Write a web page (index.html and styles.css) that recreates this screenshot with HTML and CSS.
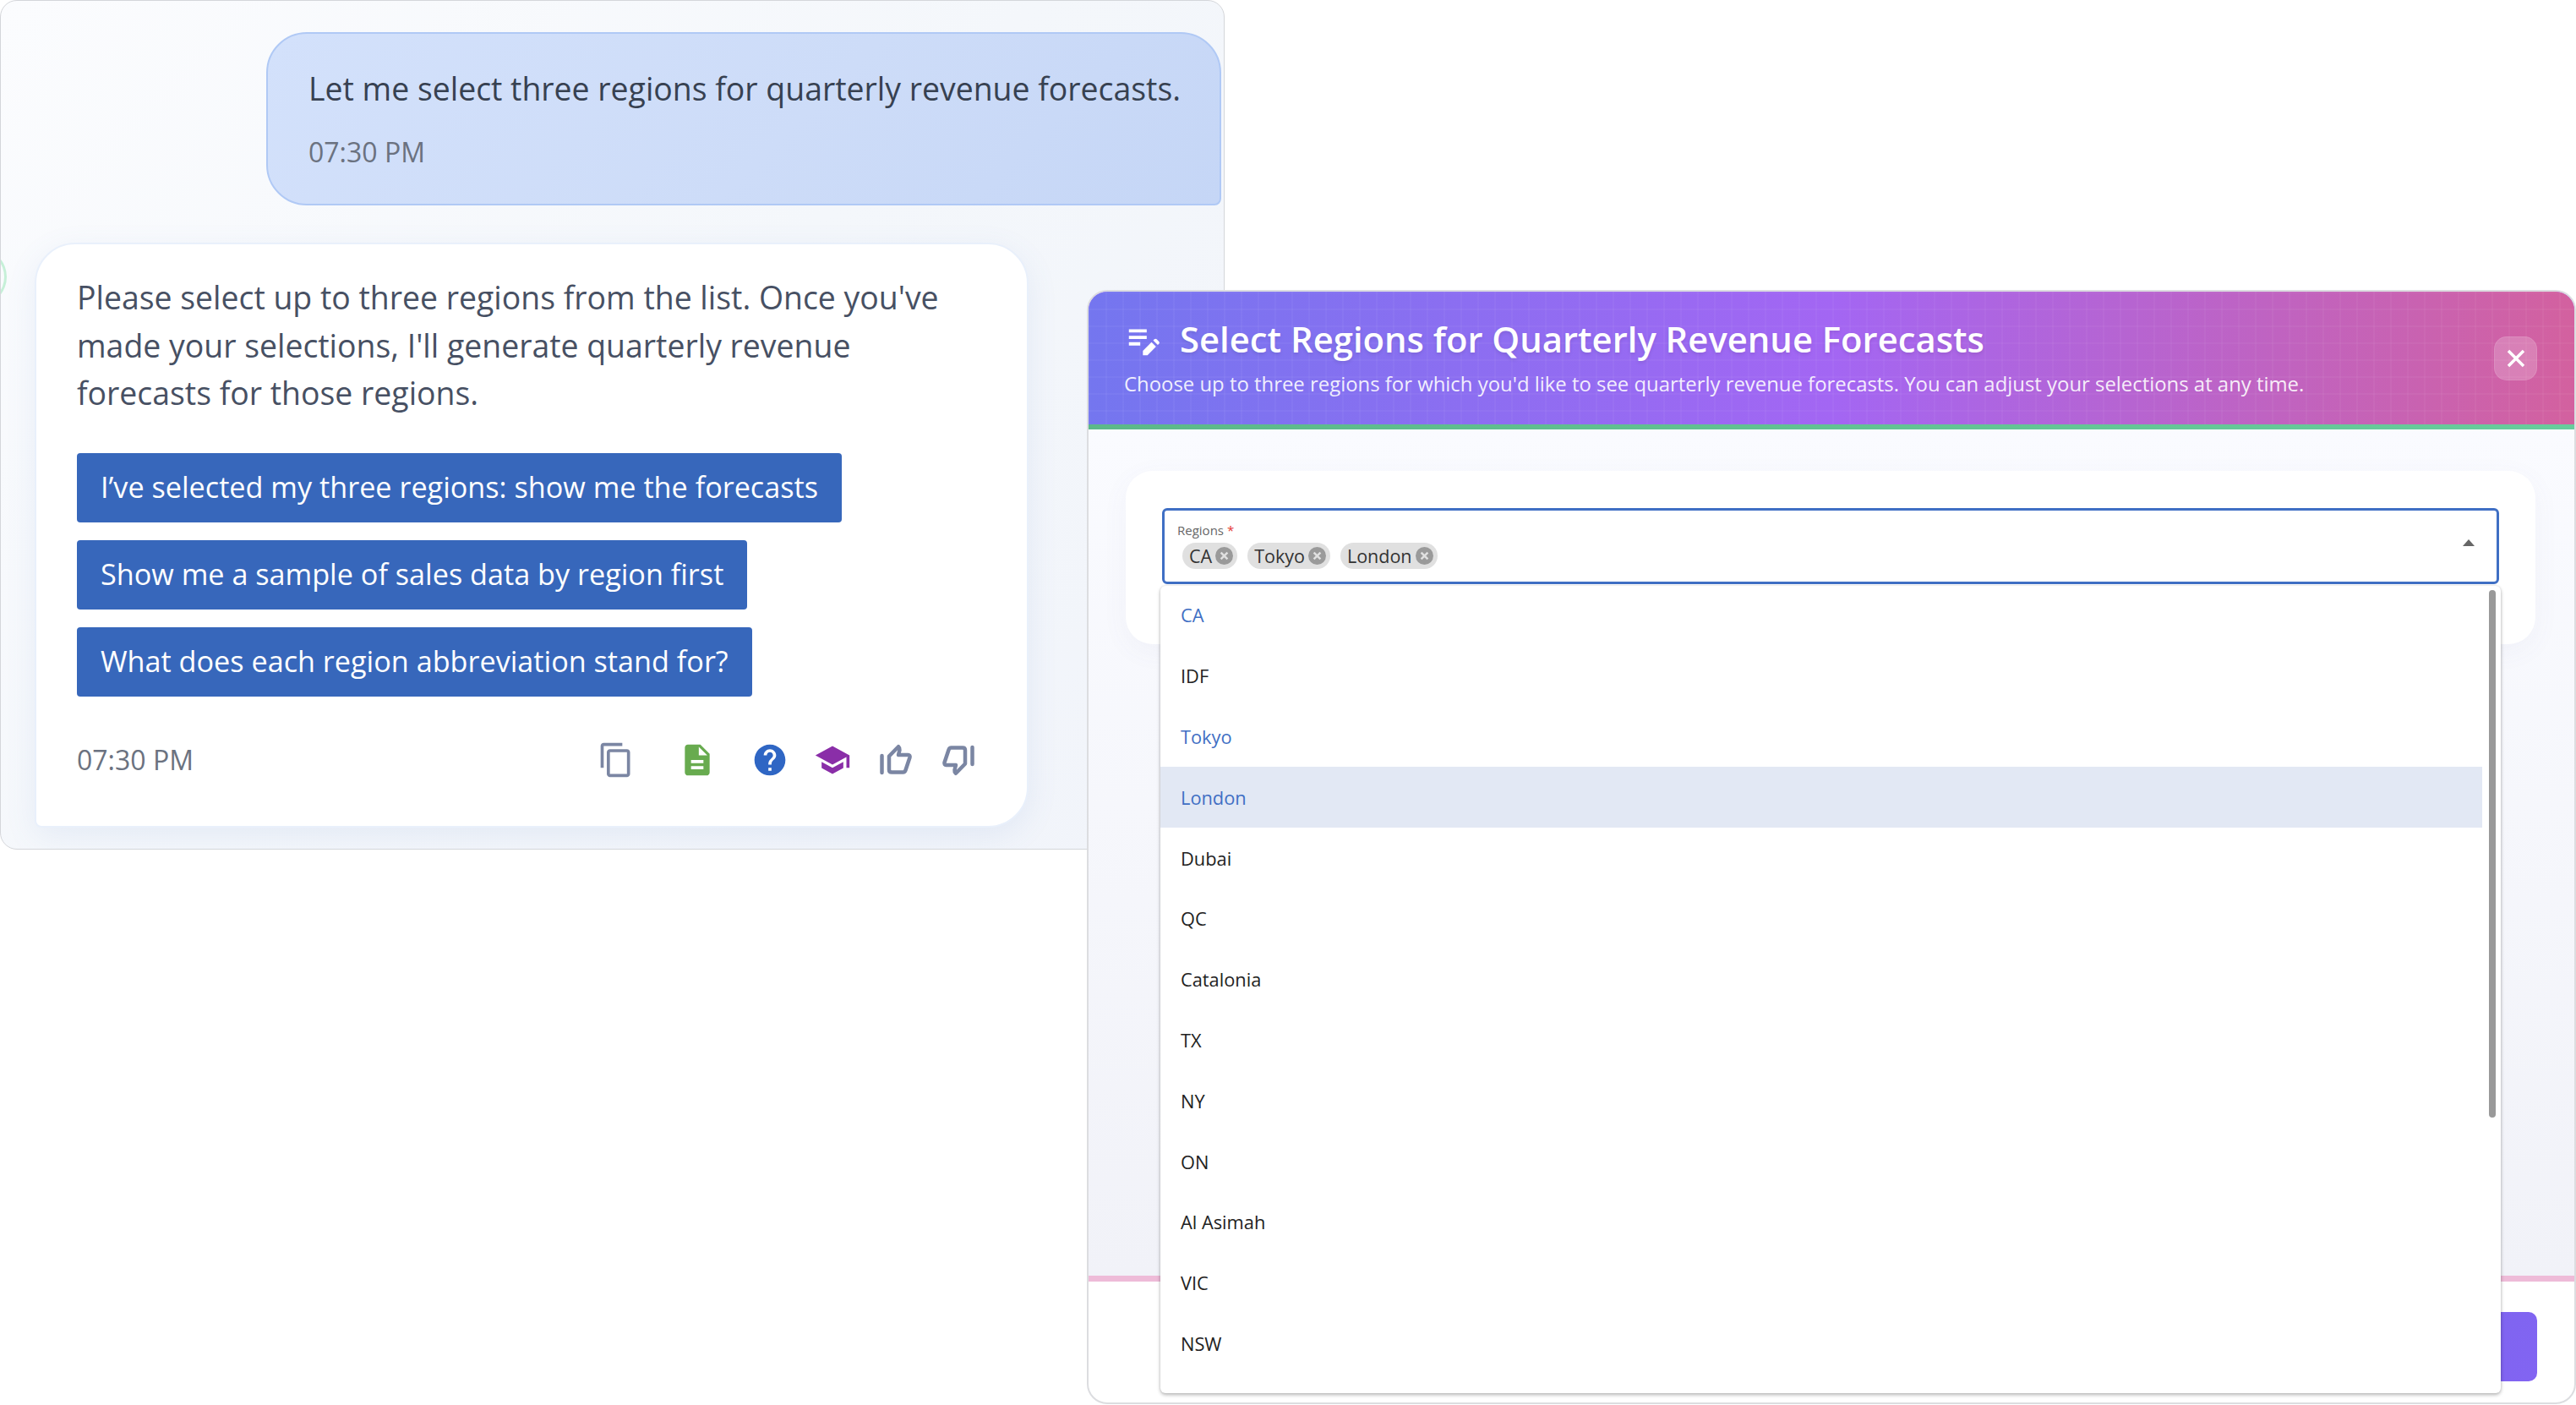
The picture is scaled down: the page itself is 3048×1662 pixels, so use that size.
FILE: index.html
```html
<!DOCTYPE html>
<html lang="en">
<head>
<meta charset="utf-8">
<title>Select Regions</title>
<link rel="stylesheet" href="styles.css">
</head>
<body>
<section class="chat-window">
  <span class="avatar-edge"></span>
  <div class="user-bubble">
    <p class="user-text">Let me select three regions for quarterly revenue forecasts.</p>
    <p class="time">07:30 PM</p>
  </div>
  <div class="agent-card">
    <p class="agent-text">Please select up to three regions from the list. Once you've made your selections, I'll generate quarterly revenue forecasts for those regions.</p>
    <div class="suggestions">
      <button class="suggestion">I’ve selected my three regions: show me the forecasts</button>
      <button class="suggestion">Show me a sample of sales data by region first</button>
      <button class="suggestion">What does each region abbreviation stand for?</button>
    </div>
    <div class="agent-foot">
      <span class="time">07:30 PM</span>
      <div class="actions">
        <svg class="icon icon-copy" viewBox="0 0 24 24"><path d="M16 1H4c-1.1 0-2 .9-2 2v14h2V3h12V1zm3 4H8c-1.1 0-2 .9-2 2v14c0 1.1.9 2 2 2h11c1.1 0 2-.9 2-2V7c0-1.1-.9-2-2-2zm0 16H8V7h11v14z"/></svg>
        <svg class="icon icon-doc" viewBox="0 0 24 24"><path d="M14 2H6c-1.1 0-1.99.9-1.99 2L4 20c0 1.1.89 2 1.99 2H18c1.1 0 2-.9 2-2V8l-6-6zm2 16H8v-2h8v2zm0-4H8v-2h8v2zm-3-5V3.5L18.5 9H13z"/></svg>
        <svg class="icon icon-help" viewBox="0 0 24 24"><path d="M12 2C6.48 2 2 6.48 2 12s4.48 10 10 10 10-4.48 10-10S17.52 2 12 2zm1 17h-2v-2h2v2zm2.07-7.75l-.9.92C13.45 12.9 13 13.5 13 15h-2v-.5c0-1.1.45-2.1 1.17-2.83l1.24-1.26c.37-.36.59-.86.59-1.41 0-1.1-.9-2-2-2s-2 .9-2 2H8c0-2.21 1.79-4 4-4s4 1.79 4 4c0 .88-.36 1.68-.93 2.25z"/></svg>
        <svg class="icon icon-school" viewBox="0 0 24 24"><path d="M5 13.18v4L12 21l7-3.82v-4L12 17l-7-3.82zM12 3 1 9l11 6 9-4.91V17h2V9L12 3z"/></svg>
        <svg class="icon icon-thumb" viewBox="0 0 44 44"><path d="M5.5 17v20M14 17.5 25 6.2c1.2 1.2 1.8 2.4 1.5 4L25 16h11.500c1.500 0 2.500 1.300 2 3l-5 15c-.5 1.500-1.500 2.500-3 2.500H17c-2 0-3-1-3-3z"/></svg>
        <svg class="icon icon-thumb icon-flip" viewBox="0 0 44 44"><path d="M5.500 17v20M14 17.500 25 6.200c1.200 1.200 1.800 2.400 1.500 4L25 16h11.500c1.500 0 2.500 1.300 2 3l-5 15c-.5 1.500-1.500 2.500-3 2.500H17c-2 0-3-1-3-3z"/></svg>
      </div>
    </div>
  </div>
</section>

<section class="dialog">
  <header class="dialog-head">
    <div class="head-text">
      <div class="head-title">
        <svg class="title-icon" viewBox="0 0 24 24"><path d="M3 10h11v2H3zm0-4h11v2H3zm0 8h7v2H3zm15.010-1.130.710-.710c.390-.390 1.020-.390 1.410 0l1.410 1.410c.390.390.390 1.020 0 1.410l-.710.710zm-1.060 1.060-5.310 5.310V22h2.820l5.300-5.300z"/></svg>
        <h1 class="title">Select Regions for Quarterly Revenue Forecasts</h1>
      </div>
      <p class="subtitle">Choose up to three regions for which you'd like to see quarterly revenue forecasts. You can adjust your selections at any time.</p>
    </div>
    <button class="close" aria-label="Close">
      <svg viewBox="0 0 22 22"><path d="M2 2 20 20M20 2 2 20"/></svg>
    </button>
  </header>
  <div class="head-rule"></div>
  <div class="dialog-body">
    <div class="form-card">
      <div class="select-wrap">
        <div class="select">
          <div class="select-main">
            <span class="select-label">Regions <span class="req">*</span></span>
            <div class="chips">
              <span class="chip">CA<svg class="chip-x" viewBox="0 0 20 20"><circle cx="10" cy="10" r="10"/><path d="M6.300 6.300l7.400 7.400M13.700 6.300l-7.400 7.400"/></svg></span>
              <span class="chip">Tokyo<svg class="chip-x" viewBox="0 0 20 20"><circle cx="10" cy="10" r="10"/><path d="M6.300 6.300l7.400 7.400M13.700 6.300l-7.400 7.400"/></svg></span>
              <span class="chip">London<svg class="chip-x" viewBox="0 0 20 20"><circle cx="10" cy="10" r="10"/><path d="M6.300 6.300l7.400 7.400M13.700 6.300l-7.400 7.400"/></svg></span>
            </div>
          </div>
          <span class="caret"></span>
        </div>
        <div class="menu">
          <ul class="options">
            <li class="option is-picked">CA</li>
            <li class="option">IDF</li>
            <li class="option is-picked">Tokyo</li>
            <li class="option is-picked is-active">London</li>
            <li class="option">Dubai</li>
            <li class="option">QC</li>
            <li class="option">Catalonia</li>
            <li class="option">TX</li>
            <li class="option">NY</li>
            <li class="option">ON</li>
            <li class="option">Al Asimah</li>
            <li class="option">VIC</li>
            <li class="option">NSW</li>
          </ul>
          <span class="thumb"></span>
        </div>
      </div>
    </div>
  </div>
  <div class="foot-rule"></div>
  <footer class="dialog-foot">
    <button class="primary" aria-label="Confirm"></button>
  </footer>
</section>
</body>
</html>
```

FILE: styles.css
```css
* { box-sizing: border-box; }
html, body { margin: 0; padding: 0; }
body {
  width: 3048px;
  height: 1662px;
  position: relative;
  overflow: hidden;
  background: #fff;
  font-family: "Open Sans", "Noto Sans", sans-serif;
}
p, h1, ul { margin: 0; padding: 0; }
button { font-family: inherit; border: 0; }

/* chat window */
.chat-window {
  position: absolute;
  left: 0;
  top: 0;
  width: 1449px;
  height: 1005px;
  padding: 37px 3px 0 40px;
  display: flex;
  flex-direction: column;
  overflow: hidden;
  background: linear-gradient(135deg, #fbfcfe 0%, #f4f7fb 50%, #f1f4fa 100%);
  border: 1px solid #d4d6da;
  border-radius: 20px;
}
.avatar-edge {
  position: absolute;
  left: -50px;
  top: 295px;
  width: 57px;
  height: 63px;
  border: 3px solid #c6f0d8;
  border-radius: 50%;
}
.user-bubble {
  width: 1130px;
  height: 205px;
  margin-left: auto;
  padding: 38px 40px 0 48px;
  background: linear-gradient(135deg, #d3e1fb 0%, #cddcf8 55%, #c5d6f6 100%);
  border: 2px solid #b0c9f5;
  border-radius: 48px 48px 8px 48px;
}
.user-text {
  font-size: 37.400px;
  line-height: 54px;
  color: #374151;
  white-space: nowrap;
}
.time {
  font-size: 32px;
  line-height: 44px;
  color: #6b7280;
}
.user-bubble .time { margin-top: 26px; }

.agent-card {
  width: 1176px;
  height: 692px;
  margin-top: 44px;
  padding: 35px 59px 0 48px;
  background: #fff;
  border: 2px solid #e9f0fb;
  border-radius: 48px 48px 48px 8px;
  box-shadow: 0 10px 36px rgba(90, 130, 200, 0.1);
}
.agent-text {
  width: 1060px;
  font-size: 37.400px;
  line-height: 56.500px;
  color: #475063;
}
.suggestions {
  margin-top: 42px;
  display: flex;
  flex-direction: column;
  align-items: flex-start;
  gap: 21px;
}
.suggestion {
  height: 82px;
  padding: 0 28px 2px;
  font-size: 34.200px;
  font-weight: 500;
  color: #fff;
  background: #3767bb;
  border-radius: 4px;
  white-space: nowrap;
}
.agent-foot {
  margin-top: 53px;
  display: flex;
  align-items: center;
  justify-content: space-between;
}
.actions {
  display: flex;
  align-items: center;
  gap: 30.500px;
}
.icon { width: 44px; height: 44px; display: block; }
.icon-copy { fill: #7b86a3; }
.icon-doc { fill: #68ab4f; margin-left: 22px; }
.icon-help { fill: #2f66c4; margin-left: 11px; }
.icon-school { fill: #8a2ea8; }
.icon-thumb {
  fill: none;
  stroke: #7b86a3;
  stroke-width: 4.500;
  stroke-linecap: round;
  stroke-linejoin: round;
}
.icon-flip { transform: rotate(180deg); }

/* dialog */
.dialog {
  position: absolute;
  left: 1286px;
  top: 343px;
  width: 1762px;
  height: 1318px;
  display: flex;
  flex-direction: column;
  background: #fff;
  border: 2px solid #dcdde0;
  border-radius: 24px;
  overflow: hidden;
}
.dialog-head {
  height: 157px;
  flex: none;
  display: flex;
  align-items: center;
  justify-content: space-between;
  padding: 0 44px 2px 42px;
  color: #fff;
  background-color: #a066f2;
  background-image:
    linear-gradient(rgba(255, 255, 255, 0.035) 2px, transparent 2px),
    linear-gradient(90deg, rgba(255, 255, 255, 0.035) 2px, transparent 2px),
    linear-gradient(90deg, #7476ef 0%, #a366f3 50%, #d3619f 100%);
  background-size: 20px 20px, 20px 20px, 100% 100%;
}
.head-title {
  display: flex;
  align-items: center;
  gap: 20px;
}
.title-icon {
  width: 46px;
  height: 46px;
  fill: #fff;
}
.title {
  font-size: 41.800px;
  line-height: 54px;
  font-weight: 600;
  white-space: nowrap;
  text-shadow: 0 2px 4px rgba(0, 0, 0, 0.1);
}
.subtitle {
  margin-top: 9px;
  font-size: 23.900px;
  line-height: 34px;
  white-space: nowrap;
  color: rgba(255, 255, 255, 0.9);
}
.close {
  width: 51px;
  height: 52px;
  padding: 0;
  margin-top: 2px;
  display: flex;
  align-items: center;
  justify-content: center;
  background: rgba(255, 255, 255, 0.2);
  border: 1px solid rgba(255, 255, 255, 0.1);
  border-radius: 15px;
}
.close svg {
  width: 22px;
  height: 22px;
  fill: none;
  stroke: #fff;
  stroke-width: 3.500;
}
.head-rule {
  height: 6px;
  flex: none;
  background: linear-gradient(90deg, #5cb88a, #68cc9c);
}
.dialog-body {
  flex: 1;
  padding: 49px 46px 0 44px;
  background: linear-gradient(180deg, #fafbff 0%, #f1f2f8 100%);
}
.form-card {
  height: 205px;
  padding: 44px 43px 0 43px;
  background: #fff;
  border-radius: 32px;
  box-shadow: 0 8px 32px rgba(100, 100, 160, 0.05);
}
.select-wrap { position: relative; }
.select {
  height: 90px;
  display: flex;
  align-items: center;
  background: #fff;
  border: 3px solid #3f6fc4;
  border-radius: 6px;
}
.select-main {
  flex: 1;
  align-self: flex-start;
  padding: 13px 0 0 15px;
}
.select-label {
  display: block;
  font-size: 15px;
  line-height: 20px;
  color: #666;
}
.req { color: #e53935; }
.chips {
  display: flex;
  gap: 12px;
  margin: 5px 0 0 6px;
}
.chip {
  height: 31px;
  padding: 0 5px 0 8px;
  display: flex;
  align-items: center;
  gap: 4px;
  font-size: 21.500px;
  color: #333;
  background: #e0e0e0;
  border-radius: 16px;
}
.chip-x { width: 21px; height: 21px; display: block; }
.chip-x circle { fill: #9a9a9a; }
.chip-x path { stroke: #e0e0e0; stroke-width: 2.400; fill: none; }
.caret {
  width: 0;
  height: 0;
  margin: 0 26px 8px 0;
  border-left: 7px solid transparent;
  border-right: 7px solid transparent;
  border-bottom: 8px solid #666;
}
.menu {
  position: absolute;
  left: -2px;
  right: -2px;
  top: 92px;
  height: 955px;
  z-index: 5;
  background: #fff;
  border-radius: 6px;
  box-shadow: 0 2px 4px rgba(0, 0, 0, 0.28), 0 0 3px rgba(0, 0, 0, 0.1);
}
.options {
  list-style: none;
  width: 1564px;
  margin-top: -1px;
}
.option {
  height: 71.800px;
  padding-left: 24px;
  display: flex;
  align-items: center;
  font-size: 21.800px;
  color: #222;
}
.is-picked { color: #3f6fc4; }
.is-active { background: #e2e8f4; }
.thumb {
  position: absolute;
  top: 5px;
  right: 6px;
  width: 8px;
  height: 624px;
  background: #999;
  border-radius: 4px;
}
.foot-rule {
  height: 7px;
  flex: none;
  background: #eebbd8;
}
.dialog-foot {
  height: 143px;
  flex: none;
  display: flex;
  justify-content: flex-end;
  align-items: flex-start;
  padding: 36px 44px 0 0;
}
.primary {
  width: 300px;
  height: 82px;
  background: linear-gradient(135deg, #7a66ee, #8264f2);
  border-radius: 10px;
}
```
